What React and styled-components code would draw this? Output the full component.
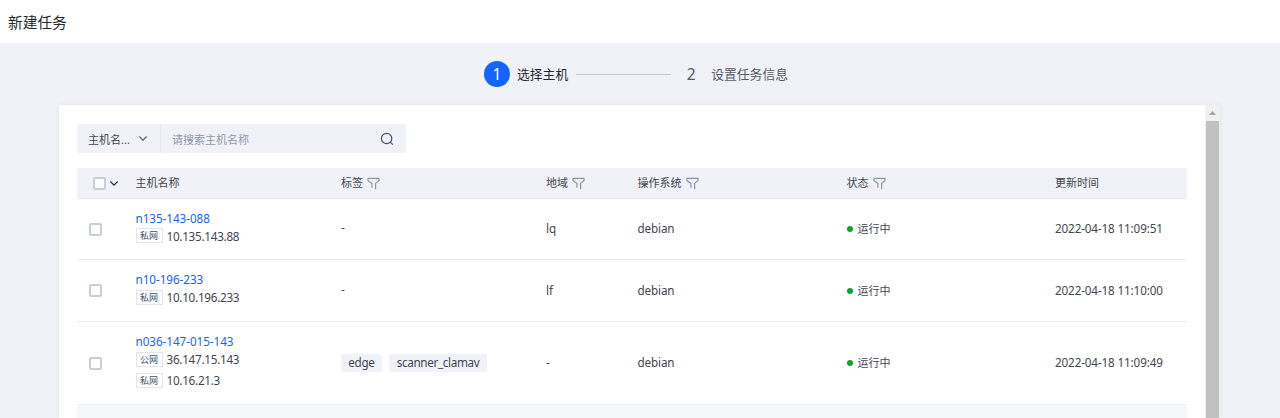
import React from "react";
import styled, { createGlobalStyle } from "styled-components";

const GlobalStyle = createGlobalStyle`
  * { box-sizing: border-box; }
  body {
    margin: 0;
    background: #f1f2f8;
    font-family: "Noto Sans", "Noto Sans CJK SC", sans-serif;
    font-size: 11px;
    color: #42464e;
    overflow: hidden;
  }
`;

const Page = styled.div`
  height: 418px;
  overflow: hidden;
  display: flex;
  flex-direction: column;
`;

const Header = styled.header`
  flex: none;
  height: 43px;
  padding: 0 8px 1px;
  background: #fff;
  display: flex;
  align-items: center;
  font-size: 14.7px;
  color: #25282e;
`;

const Steps = styled.div`
  flex: none;
  height: 62px;
  padding-left: 484px;
  display: flex;
  align-items: center;
`;

const StepNumber = styled.span`
  width: 26px;
  height: 26px;
  border-radius: 50%;
  display: flex;
  align-items: center;
  justify-content: center;
  font-size: 15.6px;
  line-height: 26px;
  background: ${(p) => (p.$active ? "#1664ff" : "transparent")};
  color: ${(p) => (p.$active ? "#fff" : "#555b66")};
`;

const StepLabel = styled.span`
  margin-left: 7px;
  font-size: 12.8px;
  line-height: 20px;
  white-space: nowrap;
  color: ${(p) => (p.$active ? "#25282e" : "#555b66")};
`;

const StepLine = styled.span`
  width: 95px;
  height: 1px;
  margin: 0 7px 0 8px;
  background: #c4c7cf;
`;

const Card = styled.main`
  flex: 1;
  min-height: 0;
  width: 1161px;
  margin-left: 59px;
  display: flex;
  background: #fff;
  border-radius: 3px 3px 0 0;
  box-shadow: 0 0 4px rgba(40, 50, 90, 0.08);
`;

const Content = styled.div`
  flex: 1;
  padding: 19px 18px 0;
  overflow: hidden;
`;

const Scrollbar = styled.div`
  width: 15px;
  background: #f1f1f1;
  display: flex;
  flex-direction: column;
  align-items: center;
`;

const ScrollUp = styled.div`
  height: 16px;
  display: flex;
  align-items: center;
`;

const Thumb = styled.div`
  flex: 1;
  width: 13px;
  background: #c1c1c1;
`;

const Search = styled.div`
  width: 329px;
  height: 29px;
  margin-bottom: 15px;
  display: flex;
  background: #f1f2f8;
  border-radius: 2px;
`;

const SearchField = styled.div`
  width: 84px;
  padding: 0 13px 0 11px;
  border-right: 1px solid #e6e8ef;
  display: flex;
  align-items: center;
  justify-content: space-between;
`;

const SearchInput = styled.div`
  flex: 1;
  padding: 0 12px 0 11px;
  display: flex;
  align-items: center;
  justify-content: space-between;
  color: #8f98a8;
`;

const Row = styled.div`
  display: grid;
  grid-template-columns: 58.5px 205.5px 205px 91.5px 209px 208.5px 1fr;
  align-items: center;
  height: ${(p) => p.$height}px;
  border-bottom: 1px solid #e9ebef;
  background: ${(p) => p.$fill || "#fff"};
`;

const HeadCell = styled.div`
  display: flex;
  align-items: center;
  gap: 4px;
  line-height: 16px;
`;

const CheckCell = styled.div`
  display: flex;
  align-items: center;
  gap: 4px;
  padding-left: ${(p) => (p.$head ? 16 : 12)}px;
`;

const Checkbox = styled.span`
  width: 13px;
  height: 13px;
  border: 2px solid #c9cdd6;
  border-radius: 2px;
  background: #fff;
`;

const Cell = styled.div`
  font-size: 11.7px;
  letter-spacing: -0.14px;
  line-height: 18px;
  white-space: nowrap;
  padding-bottom: ${(p) => p.$lift ?? 2}px;
`;

const HostLink = styled.div`
  line-height: 18px;
  letter-spacing: -0.05px;
  color: #1664ff;
`;

const Address = styled.div`
  display: flex;
  align-items: center;
  gap: 4px;
  height: 18px;
  letter-spacing: -0.27px;
  & + & { margin-top: 3px; }
`;

const NetBadge = styled.span`
  width: 27px;
  height: 15px;
  border: 1px solid #e2e5ec;
  display: flex;
  align-items: center;
  justify-content: center;
  font-size: 9px;
  letter-spacing: 0;
  line-height: 13px;
  color: #42536e;
`;

const Tags = styled.div`
  display: flex;
  gap: 7.5px;
`;

const Tag = styled.span`
  height: 18px;
  line-height: 17px;
  padding: 0 7.3px;
  border-radius: 2px;
  letter-spacing: -0.33px;
  background: #f1f2f8;
`;

const Status = styled.div`
  display: flex;
  align-items: center;
  gap: 5px;
  font-size: 11px;
  line-height: 18px;
`;

const Dot = styled.span`
  width: 6px;
  height: 6px;
  border-radius: 50%;
  background: #00a82d;
`;

const Chevron = ({ color = "#555b66" }) => (
  <svg width="8" height="5" viewBox="0 0 8 5" fill="none" stroke={color} strokeWidth="1.1">
    <path d="M0.4 0.5 4 4.1 7.6 0.5" />
  </svg>
);

const FilterIcon = () => (
  <svg width="13" height="13" viewBox="0 0 13 13" fill="none" stroke="#8d97a8" strokeWidth="1.2">
    <path d="M4.9 10.8V6.4L1 3.7V1.3H12V3.7L8.6 6.2V12.2" />
  </svg>
);

const SearchIcon = () => (
  <svg width="14" height="14" viewBox="0 0 14 14" fill="none" stroke="#42536e" strokeWidth="1.2">
    <circle cx="6.6" cy="6.5" r="5.2" />
    <path d="M10.3 10.2 12.8 12.7" />
  </svg>
);

const columns = [
  ["主机名称", false],
  ["标签", true],
  ["地域", true],
  ["操作系统", true],
  ["状态", true],
  ["更新时间", false],
];

const hosts = [
  { name: "n135-143-088", ips: [["私网", "10.135.143.88"]], tags: [], region: "lq", time: "2022-04-18 11:09:51", height: 61 },
  { name: "n10-196-233", ips: [["私网", "10.10.196.233"]], tags: [], region: "lf", time: "2022-04-18 11:10:00", height: 62 },
  { name: "n036-147-015-143", ips: [["公网", "36.147.15.143"], ["私网", "10.16.21.3"]], tags: ["edge", "scanner_clamav"], region: "-", time: "2022-04-18 11:09:49", height: 83 },
];

const HostRow = ({ host }) => (
  <Row $height={host.height}>
    <CheckCell><Checkbox /></CheckCell>
    <Cell $lift={5}>
      <HostLink>{host.name}</HostLink>
      {host.ips.map(([kind, ip]) => (
        <Address key={ip}><NetBadge>{kind}</NetBadge>{ip}</Address>
      ))}
    </Cell>
    {host.tags.length ? (
      <Cell $lift={0}><Tags>{host.tags.map((t) => <Tag key={t}>{t}</Tag>)}</Tags></Cell>
    ) : (
      <Cell $lift={4}>-</Cell>
    )}
    <Cell>{host.region}</Cell>
    <Cell>debian</Cell>
    <Status><Dot />运行中</Status>
    <Cell>{host.time}</Cell>
  </Row>
);

export default function App() {
  return (
    <Page>
      <GlobalStyle />
      <Header>新建任务</Header>
      <Steps>
        <StepNumber $active>1</StepNumber>
        <StepLabel $active>选择主机</StepLabel>
        <StepLine />
        <StepNumber>2</StepNumber>
        <StepLabel>设置任务信息</StepLabel>
      </Steps>
      <Card>
        <Content>
          <Search>
            <SearchField>主机名...<Chevron /></SearchField>
            <SearchInput>请搜索主机名称<SearchIcon /></SearchInput>
          </Search>
          <Row $height={31} $fill="#f1f2f8">
            <CheckCell $head><Checkbox /><Chevron color="#25282e" /></CheckCell>
            {columns.map(([label, filter]) => (
              <HeadCell key={label}>{label}{filter && <FilterIcon />}</HeadCell>
            ))}
          </Row>
          {hosts.map((host) => <HostRow key={host.name} host={host} />)}
          <Row $height={62} $fill="#f6f7fb" />
        </Content>
        <Scrollbar>
          <ScrollUp>
            <svg width="7" height="4" viewBox="0 0 7 4"><path d="M0 4 3.5 0 7 4Z" fill="#a3a3a3" /></svg>
          </ScrollUp>
          <Thumb />
        </Scrollbar>
      </Card>
    </Page>
  );
}
